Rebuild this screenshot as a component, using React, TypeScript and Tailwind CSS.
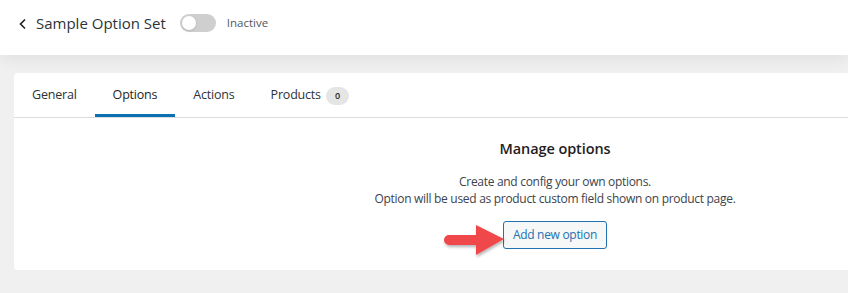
import React from "react";

function Toggle() {
  return (
    <span className="inline-flex h-[18px] w-[36px] items-center rounded-full bg-[#cfcfcf] px-[2px]">
      <span className="h-[14px] w-[14px] rounded-full bg-white shadow-sm" />
    </span>
  );
}

function RedArrow() {
  return (
    <svg
      className="absolute left-[-64px] top-[-8px]"
      width="72"
      height="50"
      viewBox="0 0 72 50"
    >
      <defs>
        <filter id="sh" x="-20%" y="-20%" width="140%" height="160%">
          <feDropShadow dx="1" dy="2" stdDeviation="1.5" floodColor="#000" floodOpacity="0.3" />
        </filter>
      </defs>
      <path
        d="M10 22 H37 L37 12 L65 26 L37 42 L37 32 H10 a5 5 0 0 1 0 -10 Z"
        fill="#f0464b"
        filter="url(#sh)"
      />
    </svg>
  );
}

export default function App() {
  const tabs = ["General", "Options", "Actions", "Products"];
  return (
    <div className="h-[293px] w-[848px] overflow-hidden bg-[#f0f0f1] font-['Open_Sans',sans-serif] text-[#1e1e1e]">
      {/* header */}
      <header className="flex h-[55px] items-center gap-[14px] bg-white pb-[9px] pl-[18px] shadow-[0_6px_14px_rgba(0,0,0,0.06)]">
        <div className="flex items-center gap-[8px]">
          <svg width="10" height="12" viewBox="0 0 10 12" className="mt-[1px]">
            <path d="M7 1.5 L2.5 6 L7 10.5" fill="none" stroke="#1e1e1e" strokeWidth="1.6" />
          </svg>
          <h1 className="text-[15px] font-medium text-[#2c3338]">Sample Option Set</h1>
        </div>
        <div className="flex items-center gap-[11px]">
          <Toggle />
          <span className="text-[11.5px] text-[#50575e]">Inactive</span>
        </div>
      </header>

      {/* card */}
      <main className="ml-[14px] mt-[18px] h-[197px] rounded-l-[4px] bg-white">
        <nav className="flex h-[45px] border-b border-[#dcdcde]">
          {tabs.map((t) => {
            const active = t === "Options";
            return (
              <div
                key={t}
                className={
                  active
                    ? "flex items-center gap-[5px] border-b-[3px] border-[#0a72b4] px-[18px] pt-[4px] text-[12.5px] font-medium tracking-[-0.2px] text-[#1e1e1e]"
                    : "flex items-center gap-[5px] border-b-[3px] border-transparent px-[18px] pt-[4px] text-[12.5px] tracking-[-0.2px] text-[#2c3338]"
                }
              >
                {t}
                {t === "Products" && (
                  <span className="flex h-[18px] w-[23px] items-center justify-center rounded-full bg-[#e5e5e5] text-[9px] font-semibold text-[#1e1e1e]">
                    0
                  </span>
                )}
              </div>
            );
          })}
        </nav>

        <section className="flex flex-col items-center pl-[248px] pt-[20px]">
          <h2 className="text-[14.5px] font-semibold tracking-[-0.1px] text-[#1e1e1e]">Manage options</h2>
          <p className="mt-[13px] text-center text-[12px] leading-[17px] tracking-[-0.3px] text-[#3c434a]">
            Create and config your own options.
            <br />
            Option will be used as product custom field shown on product page.
          </p>
          <div className="relative mt-[14px]">
            <RedArrow />
            <button className="h-[28px] rounded-[3px] border border-[#2271b1] bg-[#f6f7f7] px-[9px] text-[12px] tracking-[-0.3px] text-[#2271b1]">
              Add new option
            </button>
          </div>
        </section>
      </main>
    </div>
  );
}
